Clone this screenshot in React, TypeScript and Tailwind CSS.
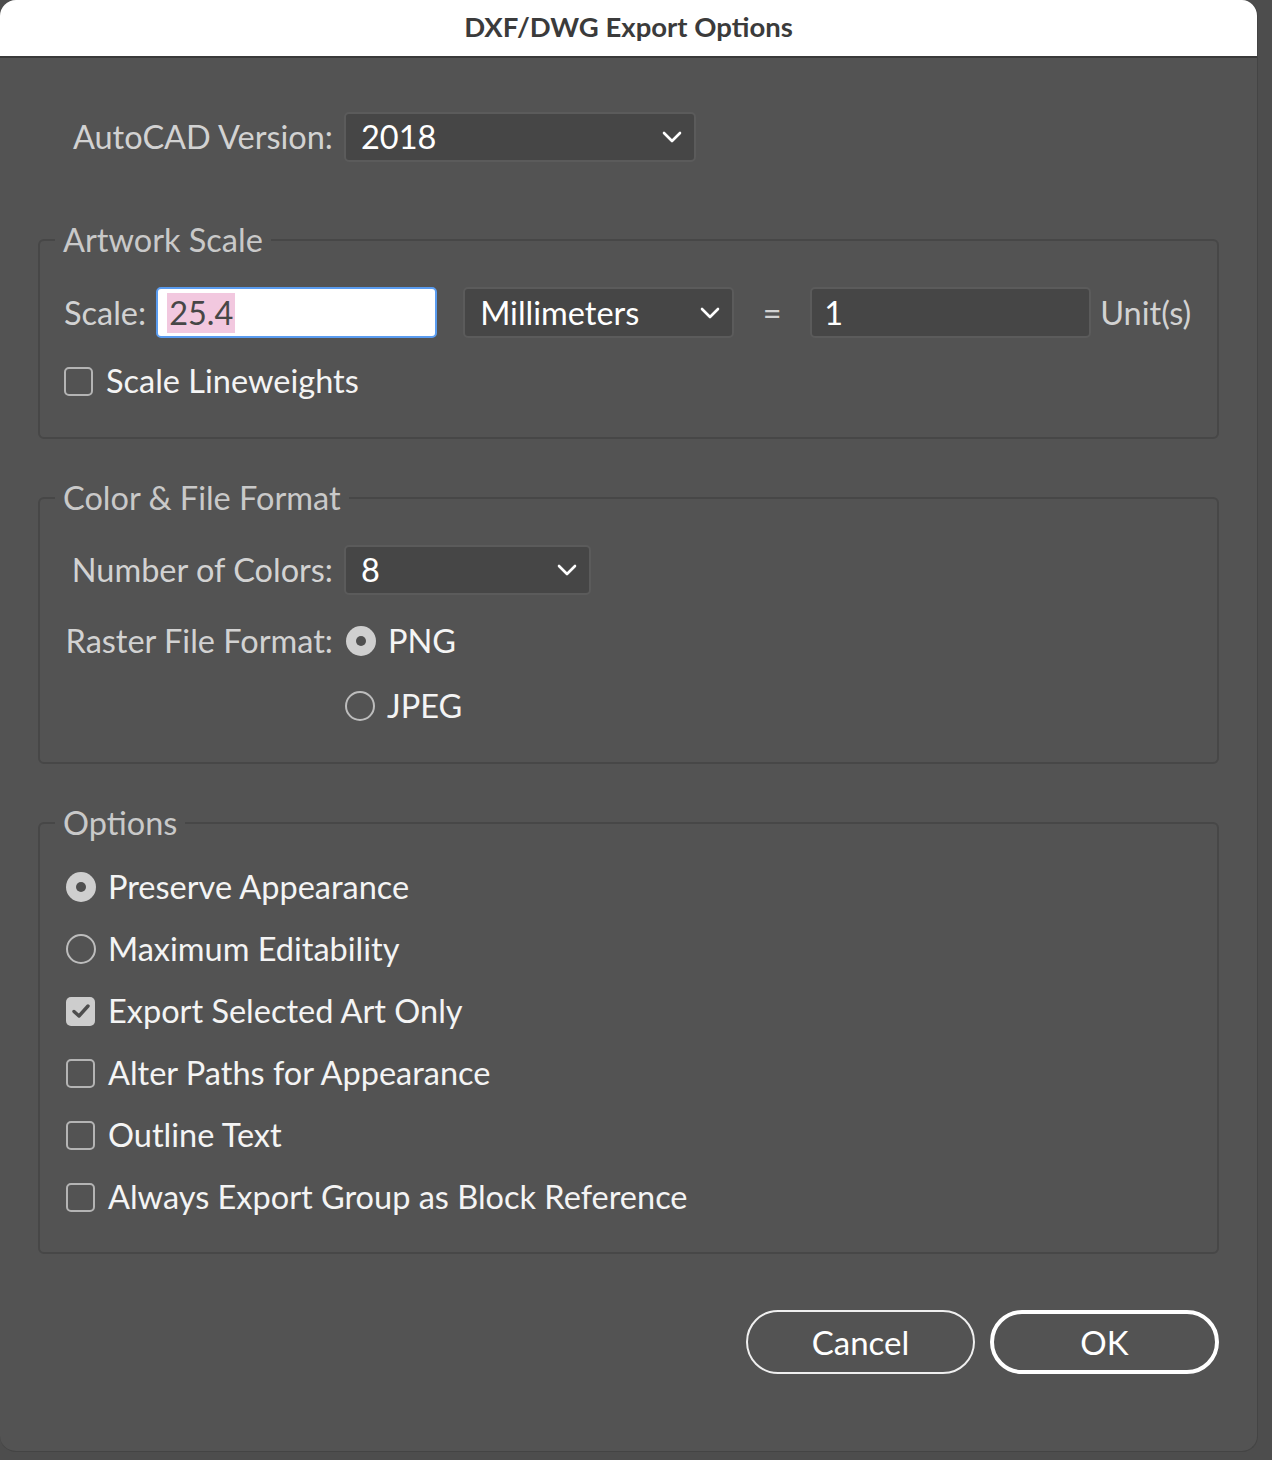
import React from "react";

function Chevron() {
  return (
    <svg width="20" height="12" viewBox="0 0 20 12" className="shrink-0">
      <polyline points="2,2 10,10 18,2" fill="none" stroke="white" strokeWidth="2.6" strokeLinecap="round" strokeLinejoin="round" />
    </svg>
  );
}

function Checkbox({ checked, label }: { checked?: boolean; label: string }) {
  return (
    <div className="flex items-center h-[40px]">
      {checked ? (
        <div className="w-[29px] h-[29px] rounded-[5px] bg-[#cdcdcd] flex items-center justify-center">
          <svg width="20" height="16" viewBox="0 0 20 16">
            <polyline points="3,8.5 8,13 17,3" fill="none" stroke="#4d4d4d" strokeWidth="3.4" strokeLinecap="round" strokeLinejoin="round" />
          </svg>
        </div>
      ) : (
        <div className="w-[29px] h-[29px] rounded-[5px] border-2 border-[#b4b4b4]" />
      )}
      <span className="ml-[13px] text-[#f4f4f4]">{label}</span>
    </div>
  );
}

function Radio({ checked, label }: { checked?: boolean; label: string }) {
  return (
    <div className="flex items-center h-[40px]">
      {checked ? (
        <div className="w-[30px] h-[30px] rounded-full bg-[#cfcfcf] flex items-center justify-center">
          <div className="w-[10px] h-[10px] rounded-full bg-[#4f4f4f]" />
        </div>
      ) : (
        <div className="w-[30px] h-[30px] rounded-full border-2 border-[#bdbdbd]" />
      )}
      <span className="ml-[12px] text-[#f4f4f4]">{label}</span>
    </div>
  );
}

export default function App() {
  return (
    <div className="w-[1272px] h-[1460px] bg-[#4d4d4d] font-['Lato',sans-serif] text-[32.5px] leading-[40px]">
      <div className="w-[1258px] h-[1452px] bg-[#535353] rounded-t-[16px] rounded-b-[16px] overflow-hidden border-r border-b border-[#444444] flex flex-col">
        <div className="h-[58px] shrink-0 bg-white border-b-2 border-[#3a3a3a] flex items-center justify-center">
          <span className="text-[27.5px] font-bold text-[#3b3b3b] leading-[30px] -mt-[3px]">DXF/DWG Export Options</span>
        </div>

        <div className="px-[38px] flex flex-col">
          {/* AutoCAD version */}
          <div className="mt-[54px] flex items-center">
            <span className="w-[295px] text-right text-[#d2d2d2]">AutoCAD Version:</span>
            <div className="ml-[11px] w-[352px] h-[50px] bg-[#464646] border-2 border-[#5b5b5b] rounded-[5px] flex items-center justify-between pl-[15px] pr-[12px]">
              <span className="text-white">2018</span>
              <Chevron />
            </div>
          </div>

          {/* Artwork Scale */}
          <fieldset className="mt-[58px] border-2 border-[#474747] rounded-[6px] min-w-0">
            <legend className="ml-[15px] px-[8px] text-[#c9c9c9]">Artwork Scale</legend>
            <div className="pt-[27px] pb-[36px] pl-[24px] flex flex-col">
              <div className="flex items-center">
                <span className="text-[#d2d2d2]">Scale:</span>
                <div className="ml-[10px] w-[281px] h-[51px] bg-white border-2 border-[#5a9cf0] rounded-[5px] flex items-center pl-[9px]">
                  <span className="bg-[#f2c8df] text-[#474747] px-[2px]">25.4</span>
                </div>
                <div className="ml-[26px] w-[271px] h-[51px] bg-[#464646] border-2 border-[#5b5b5b] rounded-[5px] flex items-center justify-between pl-[15px] pr-[12px]">
                  <span className="text-white">Millimeters</span>
                  <Chevron />
                </div>
                <span className="w-[76px] text-center text-[#d2d2d2]">=</span>
                <div className="w-[281px] h-[51px] bg-[#464646] border-2 border-[#5b5b5b] rounded-[5px] flex items-center pl-[12px]">
                  <span className="text-white">1</span>
                </div>
                <span className="ml-[9px] text-[#d2d2d2]">Unit(s)</span>
              </div>
              <div className="mt-[23px]">
                <Checkbox label="Scale Lineweights" />
              </div>
            </div>
          </fieldset>

          {/* Color & File Format */}
          <fieldset className="mt-[39px] border-2 border-[#474747] rounded-[6px] min-w-0">
            <legend className="ml-[15px] px-[8px] text-[#c9c9c9]">Color &amp; File Format</legend>
            <div className="pt-[27px] pb-[36px] flex flex-col">
              <div className="flex items-center">
                <span className="w-[293px] text-right text-[#d2d2d2]">Number of Colors:</span>
                <div className="ml-[11px] w-[247px] h-[50px] bg-[#464646] border-2 border-[#5b5b5b] rounded-[5px] flex items-center justify-between pl-[15px] pr-[12px]">
                  <span className="text-white">8</span>
                  <Chevron />
                </div>
              </div>
              <div className="mt-[26px] flex items-center">
                <span className="w-[293px] text-right text-[#d2d2d2]">Raster File Format:</span>
                <div className="ml-[13px]">
                  <Radio checked label="PNG" />
                </div>
              </div>
              <div className="mt-[25px] flex items-center">
                <span className="w-[293px]" />
                <div className="ml-[12px]">
                  <Radio label="JPEG" />
                </div>
              </div>
            </div>
          </fieldset>

          {/* Options */}
          <fieldset className="mt-[39px] border-2 border-[#474747] rounded-[6px] min-w-0">
            <legend className="ml-[15px] px-[8px] text-[#c9c9c9]">Options</legend>
            <div className="pt-[24px] pb-[35px] pl-[26px] flex flex-col gap-[22px]">
              <Radio checked label="Preserve Appearance" />
              <Radio label="Maximum Editability" />
              <Checkbox checked label="Export Selected Art Only" />
              <Checkbox label="Alter Paths for Appearance" />
              <Checkbox label="Outline Text" />
              <Checkbox label="Always Export Group as Block Reference" />
            </div>
          </fieldset>

          {/* Buttons */}
          <div className="mt-[56px] flex justify-end gap-[15px]">
            <button className="w-[229px] h-[64px] rounded-full border-2 border-[#efefef] text-white text-[33px] flex items-center justify-center">
              Cancel
            </button>
            <button className="w-[229px] h-[64px] rounded-full border-4 border-white text-white text-[33px] flex items-center justify-center">
              OK
            </button>
          </div>
        </div>
      </div>
    </div>
  );
}
